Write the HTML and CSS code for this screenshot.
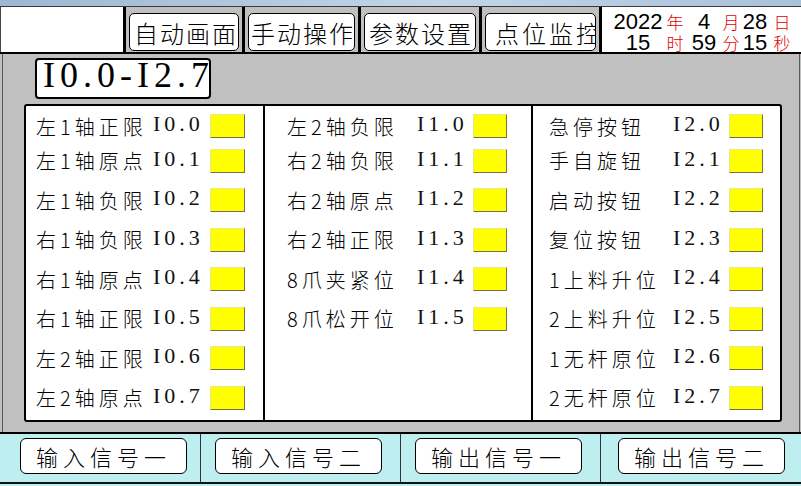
FILE: index.html
```html
<!DOCTYPE html>
<html lang="zh-CN">
<head>
<meta charset="UTF-8" />
<title>点位监控</title>
<link rel="stylesheet" href="styles.css">
</head>
<body>
  <div class="titlebar"></div>
  <header class="header">
    <div class="blank"></div>
    <div class="tab"><button class="tab-btn w1">自动画面</button></div>
    <div class="tab"><button class="tab-btn w2">手动操作</button></div>
    <div class="tab"><button class="tab-btn w3">参数设置</button></div>
    <div class="tab"><button class="tab-btn w4">点位监控</button></div>
    <div class="clock">
      <span class="num">2022</span><span class="unit">年</span>
      <span class="num">4</span><span class="unit">月</span>
      <span class="num">28</span><span class="unit">日</span>
      <span class="num">15</span><span class="unit">时</span>
      <span class="num">59</span><span class="unit">分</span>
      <span class="num">15</span><span class="unit">秒</span>
    </div>
  </header>

  <main class="main">
    <div class="range">I0.0-I2.7</div>
    <section class="panel">
      <div class="col col-a">
        <div class="row"><span class="label">左1轴正限</span><span class="code">I0.0</span><span class="lamp"></span></div>
        <div class="row"><span class="label">左1轴原点</span><span class="code">I0.1</span><span class="lamp"></span></div>
        <div class="row"><span class="label">左1轴负限</span><span class="code">I0.2</span><span class="lamp"></span></div>
        <div class="row"><span class="label">右1轴负限</span><span class="code">I0.3</span><span class="lamp"></span></div>
        <div class="row"><span class="label">右1轴原点</span><span class="code">I0.4</span><span class="lamp"></span></div>
        <div class="row"><span class="label">右1轴正限</span><span class="code">I0.5</span><span class="lamp"></span></div>
        <div class="row"><span class="label">左2轴正限</span><span class="code">I0.6</span><span class="lamp"></span></div>
        <div class="row"><span class="label">左2轴原点</span><span class="code">I0.7</span><span class="lamp"></span></div>
      </div>
      <div class="col col-b">
        <div class="row"><span class="label">左2轴负限</span><span class="code">I1.0</span><span class="lamp"></span></div>
        <div class="row"><span class="label">右2轴负限</span><span class="code">I1.1</span><span class="lamp"></span></div>
        <div class="row"><span class="label">右2轴原点</span><span class="code">I1.2</span><span class="lamp"></span></div>
        <div class="row"><span class="label">右2轴正限</span><span class="code">I1.3</span><span class="lamp"></span></div>
        <div class="row"><span class="label">8爪夹紧位</span><span class="code">I1.4</span><span class="lamp"></span></div>
        <div class="row"><span class="label">8爪松开位</span><span class="code">I1.5</span><span class="lamp"></span></div>
      </div>
      <div class="col col-c">
        <div class="row"><span class="label">急停按钮</span><span class="code">I2.0</span><span class="lamp"></span></div>
        <div class="row"><span class="label">手自旋钮</span><span class="code">I2.1</span><span class="lamp"></span></div>
        <div class="row"><span class="label">启动按钮</span><span class="code">I2.2</span><span class="lamp"></span></div>
        <div class="row"><span class="label">复位按钮</span><span class="code">I2.3</span><span class="lamp"></span></div>
        <div class="row"><span class="label">1上料升位</span><span class="code">I2.4</span><span class="lamp"></span></div>
        <div class="row"><span class="label">2上料升位</span><span class="code">I2.5</span><span class="lamp"></span></div>
        <div class="row"><span class="label">1无杆原位</span><span class="code">I2.6</span><span class="lamp"></span></div>
        <div class="row"><span class="label">2无杆原位</span><span class="code">I2.7</span><span class="lamp"></span></div>
      </div>
    </section>
  </main>

  <footer class="footer">
    <div class="foot-row">
      <div class="foot-cell"><button class="foot-btn">输入信号一</button></div>
      <div class="foot-cell"><button class="foot-btn">输入信号二</button></div>
      <div class="foot-cell"><button class="foot-btn">输出信号一</button></div>
      <div class="foot-cell"><button class="foot-btn">输出信号二</button></div>
    </div>
  </footer>
</body>
</html>
```

FILE: styles.css
```css
* {
  box-sizing: border-box;
}

body {
  margin: 0;
  width: 801px;
  height: 486px;
  overflow: hidden;
  background: #c0c0c0;
  font-family: "Noto Sans CJK SC", sans-serif;
  color: #000;
}

button {
  font-family: inherit;
  color: #000;
  cursor: pointer;
}

.titlebar {
  height: 6px;
  background: linear-gradient(to right, #9db6d2, #c4d5e8 55%, #a9c1db);
}

/* top bar */
.header {
  display: flex;
  height: 48px;
  border-top: 1px solid #3a3a3a;
  border-bottom: 2px solid #000;
}

.blank {
  width: 126px;
  background: #fff;
  border-left: 1px solid #444;
  border-right: 3px solid #000;
}

.tab {
  padding: 6px 3px 1px 3px;
  border-right: 3px solid #000;
}

.tab-btn {
  height: 38px;
  padding: 0 0 0 4px;
  background: #fff;
  border: 1px solid #000;
  border-radius: 5px;
  font-size: 24px;
  font-weight: 300;
  letter-spacing: 2px;
  text-align: left;
  white-space: nowrap;
  overflow: hidden;
}

.w1 { width: 110px; }
.w2 { width: 107px; padding-left: 2px; }
.w3 { width: 112px; }
.w4 { width: 111px; padding-left: 9px; letter-spacing: 3px; }

.clock {
  flex: 1;
  background: #fff;
  display: grid;
  grid-template-columns: 52px 22px 36px 18px 30px 24px;
  grid-auto-rows: 21px;
  padding: 4px 0 0 10px;
  line-height: 21px;
}

.clock span {
  display: flex;
  justify-content: center;
  white-space: nowrap;
}

.num {
  font-family: "Liberation Sans", Arial, sans-serif;
  font-size: 22px;
}

.unit {
  color: #e00000;
  font-size: 17px;
  font-weight: 300;
}

/* main area */
.main {
  height: 378px;
  margin: 0 1px 0 2px;
  padding-top: 4px;
  border-left: 1px solid #5a5a5a;
  border-right: 1px solid #5a5a5a;
}

.range {
  width: 176px;
  height: 41px;
  margin-left: 32px;
  padding-left: 6px;
  background: #fff;
  border: 2px solid #000;
  border-radius: 4px;
  font-family: "Liberation Serif", serif;
  font-size: 36px;
  line-height: 30px;
  letter-spacing: 5px;
  white-space: nowrap;
  overflow: hidden;
}

.panel {
  display: grid;
  grid-template-columns: 237px 268px 1fr;
  width: 758px;
  height: 318px;
  margin: 5px 0 0 21px;
  background: #fff;
  border: 2px solid #000;
  border-radius: 3px;
}

.col {
  display: grid;
  grid-template-rows: 30px repeat(7, 39.5px);
  align-content: start;
  padding-top: 5px;
}

.col-b,
.col-c {
  border-left: 2px solid #000;
}

.row {
  display: flex;
  align-items: center;
}

.label {
  font-size: 20px;
  font-weight: 300;
  letter-spacing: 4px;
  white-space: nowrap;
}

.code {
  font-family: "Liberation Serif", serif;
  font-size: 22px;
  letter-spacing: 4px;
  color: #111;
  white-space: nowrap;
  position: relative;
  top: -2px;
}

.lamp {
  width: 35px;
  height: 24px;
  background: #ffff00;
  border: 1px solid;
  border-color: #e8e890 #7a7048 #7a7048 #e8e890;
}

.col-a { padding-left: 10px; }
.col-a .label { width: 117px; }
.col-a .code { width: 57px; }

.col-b { padding-left: 22px; }
.col-b .label { width: 130px; }
.col-b .code { width: 56px; }
.col-b .lamp { width: 34px; }

.col-c { padding-left: 16px; }
.col-c .label { width: 124px; }
.col-c .code { width: 56px; }
.col-c .lamp { width: 34px; }

/* bottom bar */
.footer {
  background: #bdeef0;
  border-top: 2px solid #000;
  padding-bottom: 2px;
}

.foot-row {
  display: flex;
  height: 50px;
  border-bottom: 2px solid #111;
}

.foot-cell {
  width: 200px;
  padding: 4px 0 0 14px;
  border-left: 1px solid #333;
}

.foot-cell:first-child {
  padding-left: 20px;
  border-left: none;
}

.foot-cell:last-child {
  flex: 1;
  padding-left: 17px;
}

.foot-btn {
  width: 167px;
  height: 36px;
  padding: 0;
  background: #fff;
  border: 1px solid #000;
  border-radius: 6px;
  font-size: 22px;
  font-weight: 300;
  letter-spacing: 5px;
}
```
